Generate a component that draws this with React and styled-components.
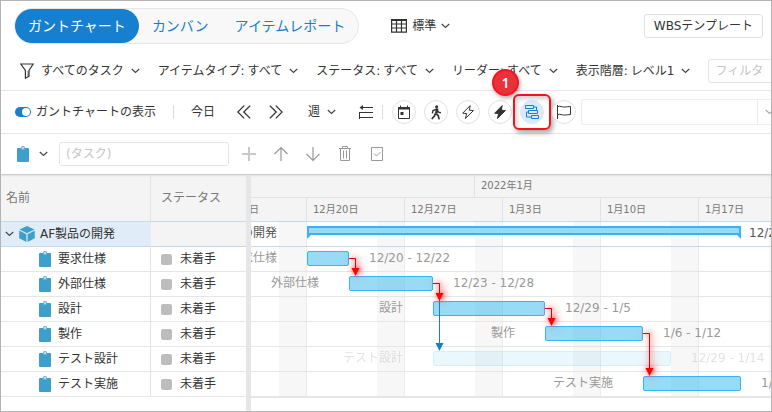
import React from "react";
import styled, { createGlobalStyle, css } from "styled-components";

const DAY = 14;
const ROW = 25;
const FIRST_DAY = 16;

const GlobalStyle = createGlobalStyle`
  *, *::before, *::after { box-sizing: border-box; }
  body { margin: 0; background: #fff; }
  body, button, input, select, table {
    font: 12px/16px "DejaVu Sans", "Noto Sans CJK JP", sans-serif;
    color: #333;
  }
  button { margin: 0; padding: 0; border: 0; background: none; cursor: pointer; white-space: nowrap; }
  input { margin: 0; }
  svg { display: block; flex: none; }
`;

const Page = styled.div`
  display: flex;
  flex-direction: column;
  min-height: 100vh;
  border: 1px solid #b4b4b4;
  overflow: hidden;
`;

const TopBar = styled.header`
  display: flex;
  align-items: center;
  height: 50px;
  padding: 0 8px 0 13px;
`;

const Tabs = styled.nav`
  display: flex;
  flex: none;
  height: 36px;
  border: 1px solid #e6e6e6;
  border-radius: 18px;
  background: #f8f8f8;
`;

const Tab = styled.a`
  display: flex;
  align-items: center;
  padding: 0 13px;
  font-size: 14px;
  line-height: 20px;
  color: #167fcf;
  text-decoration: none;
  white-space: nowrap;
  border-radius: 17px;
  ${(p) => p.$active && css`background: #167fcf; color: #fff;`}
`;

const ViewButton = styled.button`
  display: flex;
  align-items: center;
  gap: 5px;
  margin-left: 32px;
`;

const TemplateButton = styled.button`
  height: 24px;
  margin-left: auto;
  padding: 0 9px;
  border: 1px solid #e2e2e2;
  border-radius: 3px;
`;

const FilterBar = styled.div`
  display: flex;
  align-items: center;
  gap: 18px;
  height: 40px;
  padding-left: 19px;
  border-bottom: 1px solid #e6e6e6;
`;

const FilterButton = styled.button`
  display: flex;
  flex: none;
  align-items: center;
  gap: 7px;
`;

const FilterValue = styled.span`
  margin-left: 3px;
`;

const TextField = styled.input`
  flex: ${(p) => (p.$grow ? "1 0 160px" : "0 0 170px")};
  height: 24px;
  padding: 0 6px;
  border: 1px solid #e4e4e4;
  border-radius: 3px;
  outline: none;
  &::placeholder { color: #c4c4c4; }
`;

const ToolBar = styled.div`
  display: flex;
  align-items: center;
  height: 43px;
  padding-left: 14px;
  border-bottom: 1px solid #e6e6e6;
`;

const ToggleLabel = styled.label`
  display: flex;
  flex: none;
  align-items: center;
  gap: 5px;
  white-space: nowrap;
`;

const Toggle = styled.input`
  appearance: none;
  display: flex;
  align-items: center;
  justify-content: flex-end;
  width: 16px;
  height: 10px;
  padding: 1px;
  border-radius: 5px;
  background: #167fcf;
  &::before {
    content: "";
    width: 8px;
    height: 8px;
    border-radius: 50%;
    background: #fff;
  }
`;

const Separator = styled.span`
  flex: none;
  width: 1px;
  height: 14px;
  background: #dcdcdc;
  margin: 0 ${(p) => p.$gap}px;
`;

const DateNav = styled.div`
  display: flex;
  flex: none;
  align-items: center;
  gap: 18px;
`;

const DateGroup = styled.div`
  display: flex;
  align-items: center;
  gap: 22px;
`;

const ScaleGroup = styled.div`
  display: flex;
  align-items: center;
  gap: 23px;
  margin-left: 7px;
`;

const RoundGroup = styled.div`
  display: flex;
  flex: none;
  gap: 8px;
`;

const RoundSlot = styled.div`
  position: relative;
`;

const RoundButton = styled.button`
  display: flex;
  align-items: center;
  justify-content: center;
  width: 24px;
  height: 24px;
  border: 1px solid ${(p) => (p.$active ? "#dcebf8" : "#e2e2e2")};
  border-radius: 50%;
  background: ${(p) => (p.$active ? "#dcebf8" : "#fff")};
`;

const Highlight = styled.span`
  position: absolute;
  inset: -6px -7px;
  border: 2px solid #f0141e;
  border-radius: 6px;
  box-shadow: 2px 3px 5px rgba(0, 0, 0, 0.35), inset 2px 3px 4px rgba(0, 0, 0, 0.18);
  pointer-events: none;
`;

const StepBadge = styled.span`
  position: absolute;
  left: -28px;
  top: -31px;
  z-index: 2;
  display: flex;
  align-items: center;
  justify-content: center;
  width: 27px;
  height: 27px;
  border: 2px solid #f81420;
  border-radius: 50%;
  background: #e63238;
  box-shadow: 1px 2px 4px rgba(0, 0, 0, 0.35);
  color: #fff;
  font-family: "Noto Sans", sans-serif;
  font-size: 14px;
  font-weight: 600;
`;

const Combo = styled.div`
  display: flex;
  flex: 1 0 202px;
  height: 26px;
  margin-left: 5px;
  border: 1px solid #ececec;
  border-radius: 3px;
`;

const ComboInput = styled.input`
  flex: 1;
  min-width: 0;
  border: 0;
  outline: none;
  background: none;
`;

const ComboButton = styled.button`
  display: flex;
  align-items: center;
  justify-content: center;
  width: 25px;
  border-left: 1px solid #ececec;
`;

const TaskBar = styled.div`
  display: flex;
  align-items: center;
  height: 41px;
  padding-left: 16px;
  border-bottom: 1px solid #cdcdcd;
`;

const TypeButton = styled.button`
  display: flex;
  align-items: center;
  gap: 10px;
  margin-right: 11px;
`;

const ActionGroup = styled.div`
  display: flex;
  gap: 16px;
  margin-left: 12px;
`;

const ActionButton = styled.button`
  display: flex;
  align-items: center;
  justify-content: center;
  width: 16px;
  height: 24px;
`;

const Split = styled.main`
  display: flex;
  flex: 1;
`;

const ListPane = styled.section`
  flex: none;
  width: 250px;
  border-right: 5px solid #e6e6e6;
`;

const Table = styled.table`
  width: 100%;
  table-layout: fixed;
  border-collapse: separate;
  border-spacing: 0;
`;

const HeadCell = styled.th`
  height: 47px;
  width: ${(p) => p.$width}px;
  padding: 0 ${(p) => (p.$first ? 5 : 10)}px;
  background: #f4f4f4;
  border-bottom: 1px solid #c2daec;
  border-right: ${(p) => (p.$first ? "1px solid #e4e4e4" : "0")};
  box-shadow: inset 0 2px 2px -1px #e0e0e0;
  text-align: left;
  font-weight: 400;
  color: #777;
`;

const Cell = styled.td`
  height: ${ROW}px;
  padding: 0;
  border-bottom: 1px solid ${(p) => (p.$project ? "#c2daec" : "#e6e6e6")};
  border-right: ${(p) => (p.$first ? `1px solid ${p.$project ? "#e0edf8" : "#e4e4e4"}` : "0")};
  background: ${(p) => (p.$project ? (p.$first ? "#e0edf8" : "#f4f4f4") : "#fff")};
`;

const NameContent = styled.div`
  display: flex;
  align-items: center;
  gap: ${(p) => (p.$project ? 5 : 7)}px;
  padding-left: ${(p) => (p.$project ? 4 : 38)}px;
`;

const StatusContent = styled.div`
  display: flex;
  align-items: center;
  gap: 8px;
  padding-left: 10px;
`;

const StatusMark = styled.span`
  width: 11px;
  height: 11px;
  border-radius: 2px;
  background: #bdbdbd;
`;

const ChartPane = styled.section`
  flex: 1;
  min-width: 0;
  overflow: hidden;
`;

const ChartHead = styled.div`
  background: #f4f4f4;
  border-bottom: 1px solid #c2daec;
  box-shadow: inset 0 2px 2px -1px #e0e0e0;
  color: #777;
  font-size: 10px;
`;

const Scale = styled.div`
  display: grid;
  grid-auto-flow: column;
  grid-auto-columns: ${DAY}px;
  height: 23px;
  ${(p) => p.$month && css`border-bottom: 1px solid #e2e2e2;`}
`;

const ScaleCell = styled.div`
  grid-column: span ${(p) => p.$days};
  display: flex;
  align-items: center;
  justify-content: ${(p) => (p.$end ? "flex-end" : "flex-start")};
  overflow: hidden;
  padding: ${(p) => (p.$end ? "0 47px 0 0" : "0 0 0 6px")};
  border-right: 1px solid #e2e2e2;
  white-space: nowrap;
`;

const ChartBody = styled.div`
  position: relative;
  border-bottom: 1px solid #e6e6e6;
  background-image: linear-gradient(to right, #f7f7f7 0, #f7f7f7 27px, #ececec 27px, #ececec 28px, transparent 28px);
  background-size: ${DAY * 7}px 100%;
  background-position: 28px 0;
`;

const ChartRow = styled.div`
  display: grid;
  grid-template-columns: repeat(44, ${DAY}px);
  height: ${ROW}px;
  border-bottom: 1px solid ${(p) => (p.$project ? "#c2daec" : "#e6e6e6")};
`;

const RowText = styled.span`
  grid-row: 1;
  align-self: start;
  padding-top: 3px;
  line-height: 16px;
  white-space: nowrap;
  color: ${(p) => (p.$project ? "#555" : "#999")};
  opacity: ${(p) => (p.$faded ? 0.28 : 1)};
`;

const TaskName = styled(RowText)`
  grid-column: 1 / ${(p) => p.$start};
  justify-self: end;
  padding-right: 30px;
`;

const TaskDates = styled(RowText)`
  grid-column: ${(p) => p.$end} / span 7;
  padding-left: ${(p) => (p.$project ? 8 : 20)}px;
`;

const Bar = styled.div`
  grid-row: 1;
  grid-column: ${(p) => p.$start} / ${(p) => p.$end};
  height: 15px;
  margin-top: 4px;
  border: 1px solid #36b4fa;
  border-radius: 2px;
  background: rgba(51, 181, 235, 0.5);
  opacity: ${(p) => (p.$faded ? 0.2 : 1)};
`;

const SummaryBar = styled.div`
  grid-row: 1;
  grid-column: ${(p) => p.$start} / ${(p) => p.$end};
  display: flex;
  justify-content: space-between;
  align-items: flex-end;
  height: 13px;
  margin-top: 4px;
  background: linear-gradient(#36b4fa 2px, #98daf6 2px, #98daf6 7px, #36b4fa 7px, #36b4fa 9px, transparent 9px);
  &::before, &::after {
    content: "";
    width: 4px;
    height: 13px;
    background: #36b4fa;
  }
  &::before { clip-path: polygon(0 0, 2px 0, 2px 9px, 4px 9px, 0 100%); }
  &::after { clip-path: polygon(100% 0, 2px 0, 2px 9px, 0 9px, 100% 100%); }
`;

const Links = styled.svg`
  position: absolute;
  left: 0;
  top: 0;
  overflow: visible;
  pointer-events: none;
`;

const CriticalLinks = styled.g`
  filter: drop-shadow(1px 0 2px rgba(255, 40, 40, 0.8)) drop-shadow(1px 0 4px rgba(255, 60, 60, 0.7));
`;

const Icon = ({ w = 16, h = 16, color = "#333", width = 1, children }) => (
  <svg width={w} height={h} viewBox={`0 0 ${w} ${h}`} fill="none" stroke={color} strokeWidth={width} aria-hidden="true">
    {children}
  </svg>
);

const Chevron = ({ color = "#444" }) => (
  <Icon w={9} h={6} color={color} width={1.2}><path d="M.8 1 4.5 4.4 8.2 1" /></Icon>
);
const TableIcon = () => (
  <Icon w={16} h={14} width={1.2}>
    <path d="M.6 1h14.8v12.2H.6zM.6 5h14.8M.6 9h14.8M5.5 1v12M10.5 1v12" />
    <path d="M0 1h16" strokeWidth="2" />
  </Icon>
);
const FunnelIcon = () => (
  <Icon w={14} h={16} width={1.2}>
    <path d="M7 8h2v5l-2 2z" fill="#bbb" stroke="none" />
    <path d="M.8 1h12.4L9 7.4v5.8l-3.6 2V7.4z" />
  </Icon>
);
const DoubleLeft = () => <Icon w={14} h={14} width={1.3}><path d="M7.2.6.8 7l6.4 6.4M13.2.6 6.8 7l6.4 6.4" /></Icon>;
const DoubleRight = () => <Icon w={14} h={14} width={1.3}><path d="M.8.6 7.2 7 .8 13.4M6.8.6 13.2 7l-6.4 6.4" /></Icon>;
const OutdentIcon = () => (
  <Icon w={14} h={14}>
    <path d="M3 2.5h11M0 7.5h14M0 12.5h14M.5 7v7" />
    <path d="M4 0v5L.5 2.5z" fill="#333" stroke="none" />
  </Icon>
);
const CalendarIcon = () => (
  <Icon w={14} h={14}>
    <path d="M1.5 2.5h11v11h-11z" />
    <path d="M1.5 3.5h11" strokeWidth="2" />
    <path d="M3.5.5v3M10.5.5v3" />
    <path d="M3.5 7h3v3h-3z" fill="#333" stroke="none" />
  </Icon>
);
const WalkIcon = () => (
  <Icon w={12} h={15}>
    <circle cx="6.6" cy="1.8" r="1.5" fill="#333" stroke="none" />
    <path d="M5.6 4.2 7 4.6l-.8 4" strokeWidth="2.6" />
    <path d="M6 4.4 3 5.6 2.4 8.4M7.2 5l1.3 2.2 2.4.6" strokeWidth="1.4" />
    <path d="M5.4 8.4 4.4 11 1.8 14M6.2 8.6l2 2 1 3.8" strokeWidth="1.7" />
  </Icon>
);
const BoltIcon = ({ filled }) => (
  <Icon w={12} h={14}>
    <path d="M8.2.6.7 8.2l4 .4-1.3 4.900L11.400 5.600l-4.100-.4z" fill={filled ? "#333" : "none"} strokeLinejoin="round" />
  </Icon>
);
const ScheduleIcon = () => (
  <Icon w={14} h={14} color="#167fcf">
    <path d="M.5.5h8v3h-8zM3.5 5.5h9v3h-9zM6.5 10.5h7v3h-7zM8.5 2h3v3.5M3.5 7h-2v5h5" />
  </Icon>
);
const FlagIcon = () => (
  <Icon w={16} h={14}>
    <path d="M1.5 0v14M1.5 1.5c3-1 4 .8 7 .6 2.3 0 3.7-.8 6-.6v8c-2.3-.2-3.7.8-6 .6-3 0-4-1.3-7-.6" />
  </Icon>
);
const PlusIcon = () => <Icon color="#c8c8c8" width={2}><path d="M1 8h14M8 1v14" /></Icon>;
const UpIcon = () => <Icon color="#999" width={1.2}><path d="M8 15V1.5M1.5 8 8 1.5 14.5 8" /></Icon>;
const DownIcon = () => <Icon color="#999" width={1.2}><path d="M8 1v13.5M1.5 8 8 14.5 14.5 8" /></Icon>;
const TrashIcon = () => (
  <Icon color="#999"><path d="M2 2.5h12M5.5 2.5v-2h5v2M3.5 2.5v12h9v-12M6.5 4.5v8M9.5 4.5v8" /></Icon>
);
const CheckIcon = () => <Icon color="#999"><path d="M2.5 1.5h11v13h-11zM5 7.5l2.5 2.5L11.5 6" /></Icon>;
const TaskIcon = () => (
  <Icon w={12} h={16}>
    <rect x="0" y="2" width="12" height="14" rx="1" fill="#3f9fcb" stroke="none" />
    <rect x="4" y="0" width="4" height="4" rx="1.5" fill="#6db7d9" stroke="none" />
    <circle cx="6" cy="2" r="1" fill="#cfe7f3" stroke="none" />
  </Icon>
);
const CubeIcon = () => (
  <Icon>
    <path d="M8 0 15.5 3.6 8 7.3.5 3.6zM.2 4.6l7.2 3.6V16L.2 12.3zM15.8 4.6 8.6 8.2V16l7.2-3.7z" fill="#3f9fcb" stroke="none" />
  </Icon>
);

const filters = [
  { label: "すべてのタスク", icon: true },
  { label: "アイテムタイプ:", value: "すべて" },
  { label: "ステータス:", value: "すべて" },
  { label: "リーダー:", value: "すべて" },
  { label: "表示階層:", value: "レベル1" },
];

const roundTools = [
  { label: "日付", icon: <CalendarIcon /> },
  { label: "進行", icon: <WalkIcon /> },
  { label: "負荷", icon: <BoltIcon /> },
  { label: "過負荷", icon: <BoltIcon filled /> },
  { label: "クリティカルパス", icon: <ScheduleIcon />, active: true },
  { label: "フラグ", icon: <FlagIcon /> },
];

const actions = [
  { label: "追加", icon: <PlusIcon /> },
  { label: "上へ", icon: <UpIcon /> },
  { label: "下へ", icon: <DownIcon /> },
  { label: "削除", icon: <TrashIcon /> },
  { label: "完了", icon: <CheckIcon /> },
];

/* start and end are days counted from December 1; end is exclusive */
const tasks = [
  { name: "AF製品の開発", start: 20, end: 51, dates: "12/20 - 1/19", project: true },
  { name: "要求仕様", start: 20, end: 23, dates: "12/20 - 12/22" },
  { name: "外部仕様", start: 23, end: 29, dates: "12/23 - 12/28" },
  { name: "設計", start: 29, end: 37, dates: "12/29 - 1/5" },
  { name: "製作", start: 37, end: 44, dates: "1/6 - 1/12" },
  { name: "テスト設計", start: 29, end: 46, dates: "12/29 - 1/14", faded: true },
  { name: "テスト実施", start: 44, end: 51, dates: "1/13 - 1/19" },
];

const criticalLinks = [[1, 2], [2, 3], [3, 4], [4, 6]];
const weeks = ["12月20日", "12月27日", "1月3日", "1月10日", "1月17日", "1月24日"];
const column = (day) => day - FIRST_DAY + 1;

function DependencyLinks() {
  return (
    <Links width="1" height="1" fill="none" aria-hidden="true">
      <path d="M188.5 70V122" stroke="#167fcf" />
      <path d="M184.5 121h8l-4 8z" fill="#167fcf" />
      <CriticalLinks>
        {criticalLinks.map(([from, to]) => {
          const x = (tasks[from].end - FIRST_DAY) * DAY;
          const y = from * ROW + 11.5;
          const tip = to * ROW + 4;
          return (
            <g key={from}>
              <path d={`M${x} ${y}h6.5V${tip - 7}`} stroke="#d8000c" />
              <path d={`M${x + 2.5} ${tip - 8}h8l-4 8z`} fill="#ff0000" />
            </g>
          );
        })}
      </CriticalLinks>
    </Links>
  );
}

function TaskTable() {
  return (
    <Table>
      <thead>
        <tr>
          <HeadCell $first $width={150}>名前</HeadCell>
          <HeadCell $width={95}>ステータス</HeadCell>
        </tr>
      </thead>
      <tbody>
        {tasks.map((t) => (
          <tr key={t.name}>
            <Cell $first $project={t.project}>
              <NameContent $project={t.project}>
                {t.project && <Chevron />}
                {t.project ? <CubeIcon /> : <TaskIcon />}
                {t.name}
              </NameContent>
            </Cell>
            <Cell $project={t.project}>
              {!t.project && <StatusContent><StatusMark />未着手</StatusContent>}
            </Cell>
          </tr>
        ))}
      </tbody>
    </Table>
  );
}

function Timeline() {
  return (
    <ChartPane>
      <ChartHead>
        <Scale $month>
          <ScaleCell $days={16} />
          <ScaleCell $days={31}>2022年1月</ScaleCell>
        </Scale>
        <Scale>
          <ScaleCell $days={4} $end>12月13日</ScaleCell>
          {weeks.map((w) => <ScaleCell key={w} $days={7}>{w}</ScaleCell>)}
        </Scale>
      </ChartHead>
      <ChartBody>
        {tasks.map((t) => {
          const place = { $start: column(t.start), $end: column(t.end), $faded: t.faded, $project: t.project };
          return (
            <ChartRow key={t.name} $project={t.project}>
              <TaskName {...place}>{t.name}</TaskName>
              {t.project ? <SummaryBar {...place} /> : <Bar {...place} />}
              <TaskDates {...place}>{t.dates}</TaskDates>
            </ChartRow>
          );
        })}
        <DependencyLinks />
      </ChartBody>
    </ChartPane>
  );
}

export default function App() {
  return (
    <>
      <GlobalStyle />
      <Page>
        <TopBar>
          <Tabs>
            <Tab href="#gantt" $active>ガントチャート</Tab>
            <Tab href="#kanban">カンバン</Tab>
            <Tab href="#report">アイテムレポート</Tab>
          </Tabs>
          <ViewButton><TableIcon />標準<Chevron /></ViewButton>
          <TemplateButton>WBSテンプレート</TemplateButton>
        </TopBar>
        <FilterBar>
          {filters.map((f) => (
            <FilterButton key={f.label}>
              {f.icon && <FunnelIcon />}
              <span>{f.label}{f.value && <FilterValue>{f.value}</FilterValue>}</span>
              <Chevron />
            </FilterButton>
          ))}
          <TextField $grow placeholder="フィルタ" aria-label="フィルタ" />
        </FilterBar>
        <ToolBar>
          <ToggleLabel>
            <Toggle type="checkbox" role="switch" defaultChecked />
            ガントチャートの表示
          </ToggleLabel>
          <Separator $gap={17} />
          <DateNav>
            <DateGroup>
              <button>今日</button>
              <button aria-label="前へ"><DoubleLeft /></button>
            </DateGroup>
            <button aria-label="次へ"><DoubleRight /></button>
            <ScaleGroup>
              <FilterButton>週<Chevron /></FilterButton>
              <button aria-label="階層"><OutdentIcon /></button>
            </ScaleGroup>
          </DateNav>
          <Separator $gap={9} />
          <RoundGroup>
            {roundTools.map((t) => (
              <RoundSlot key={t.label}>
                <RoundButton aria-label={t.label} $active={t.active}>{t.icon}</RoundButton>
                {t.active && <><Highlight /><StepBadge>1</StepBadge></>}
              </RoundSlot>
            ))}
          </RoundGroup>
          <Combo>
            <ComboInput aria-label="ベースライン" />
            <ComboButton aria-label="開く"><Chevron color="#aaa" /></ComboButton>
          </Combo>
        </ToolBar>
        <TaskBar>
          <TypeButton aria-label="種類"><TaskIcon /><Chevron /></TypeButton>
          <TextField placeholder="(タスク)" aria-label="タスク" />
          <ActionGroup>
            {actions.map((a) => <ActionButton key={a.label} aria-label={a.label}>{a.icon}</ActionButton>)}
          </ActionGroup>
        </TaskBar>
        <Split>
          <ListPane><TaskTable /></ListPane>
          <Timeline />
        </Split>
      </Page>
    </>
  );
}
